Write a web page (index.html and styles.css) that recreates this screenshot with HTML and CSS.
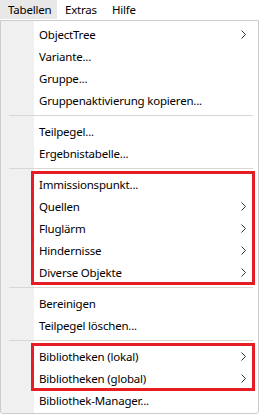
FILE: index.html
```html
<!DOCTYPE html>
<html lang="de">
    <head>
        <title>Tabellen Menu</title>
        <link rel="stylesheet" href="styles.css">
    </head>
    <body>

<div class="menubar">
    <span class="menubar-item active">Tabellen</span>
    <span class="menubar-item">Extras</span>
    <span class="menubar-item">Hilfe</span>
</div>

<div class="popup">
    <div class="item">ObjectTree <svg class="arrow" width="5" height="9" viewBox="0 0 5 9"><polyline points="0.5,0.5 4.5,4.5 0.5,8.5"/></svg></div>
    <div class="item">Variante...</div>
    <div class="item">Gruppe...</div>
    <div class="item">Gruppenaktivierung kopieren...</div>
    <div class="sep"></div>
    <div class="item">Teilpegel...</div>
    <div class="item">Ergebnistabelle...</div>
    <div class="sep"></div>
    <div class="marked">
        <div class="item">Immissionspunkt...</div>
        <div class="item">Quellen <svg class="arrow" width="5" height="9" viewBox="0 0 5 9"><polyline points="0.5,0.5 4.5,4.5 0.5,8.5"/></svg></div>
        <div class="item">Fluglärm <svg class="arrow" width="5" height="9" viewBox="0 0 5 9"><polyline points="0.5,0.5 4.5,4.5 0.5,8.5"/></svg></div>
        <div class="item">Hindernisse <svg class="arrow" width="5" height="9" viewBox="0 0 5 9"><polyline points="0.5,0.5 4.5,4.5 0.5,8.5"/></svg></div>
        <div class="item">Diverse Objekte <svg class="arrow" width="5" height="9" viewBox="0 0 5 9"><polyline points="0.5,0.5 4.5,4.5 0.5,8.5"/></svg></div>
    </div>
    <div class="sep"></div>
    <div class="item">Bereinigen</div>
    <div class="item">Teilpegel löschen...</div>
    <div class="sep"></div>
    <div class="marked">
        <div class="item">Bibliotheken (lokal) <svg class="arrow" width="5" height="9" viewBox="0 0 5 9"><polyline points="0.5,0.5 4.5,4.5 0.5,8.5"/></svg></div>
        <div class="item">Bibliotheken (global) <svg class="arrow" width="5" height="9" viewBox="0 0 5 9"><polyline points="0.5,0.5 4.5,4.5 0.5,8.5"/></svg></div>
    </div>
    <div class="item">Bibliothek-Manager...</div>
</div>

    </body>
</html>
```

FILE: styles.css
```css
body {
    margin: 0;
    background: #fff;
    font-family: "Noto Sans", "Open Sans", sans-serif;
    font-size: 11.5px;
    letter-spacing: -0.2px;
    color: #000;
}
.menubar {
    display: flex;
    height: 20px;
}
.menubar-item {
    padding: 0 7px 0 8px;
    line-height: 19px;
    height: 19px;
}
.menubar-item.active {
    background-color: #e8e8e8;
    width: 42px;
}
.popup {
    width: 257px;
    border: 1px solid #cccccc;
    border-radius: 0 0 3px 3px;
    padding: 2px 0;
    background: linear-gradient(to right, #f0f0f0 33px, #fff 33px);
}
.item {
    display: flex;
    align-items: center;
    justify-content: space-between;
    height: 22px;
    padding: 0 12px 0 38px;
}
.arrow {
    fill: none;
    stroke: #333;
    stroke-width: 1;
}
.sep {
    height: 1px;
    margin: 4px 5px 4px 8px;
    background-color: #d7d7d7;
}
.marked {
    margin: 0 5px 0 32px;
    outline: 3px solid #e81c24;
    outline-offset: -1px;
}
.marked .item {
    padding: 0 7px 0 6px;
}
```
